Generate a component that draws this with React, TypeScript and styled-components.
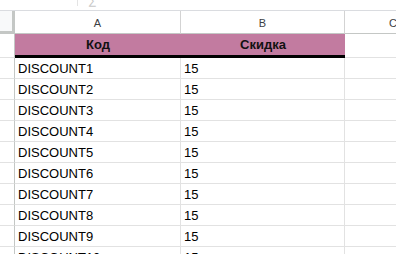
import { createGlobalStyle, styled } from 'styled-components';

const GlobalStyle = createGlobalStyle`
  html, body {
    margin: 0;
    padding: 0;
    background: #ffffff;
    overflow: hidden;
  }
  body {
    font-family: 'Liberation Sans', Arial, sans-serif;
  }
`;

// row head, A, B, C (C runs past the window edge)
const COLS = '15px 166px 164px 96px';

const rows = Array.from({ length: 10 }, (_, i) => ({
  code: `DISCOUNT${i + 1}`,
  discount: '15',
}));

export default function App() {
  return (
    <Sheet>
      <GlobalStyle />
      <TopStrip>
        <Divider />
        <FuncGlyph>∑</FuncGlyph>
      </TopStrip>
      <ColHeadRow>
        <Corner />
        <ColHead>A</ColHead>
        <ColHead>B</ColHead>
        <ColHead $last>C</ColHead>
      </ColHeadRow>
      <TitleRow>
        <RowHead />
        <TitleCell>Код</TitleCell>
        <TitleCell>Скидка</TitleCell>
        <Cell />
      </TitleRow>
      {rows.map((r) => (
        <Row key={r.code}>
          <RowHead />
          <Cell>{r.code}</Cell>
          <Cell>{r.discount}</Cell>
          <Cell />
        </Row>
      ))}
    </Sheet>
  );
}

const Sheet = styled.div`
  width: 396px;
  height: 254px;
  overflow: hidden;
  background: #fff;
`;

const TopStrip = styled.div`
  height: 10px;
  border-bottom: 1px solid #dadce0;
  display: flex;
  align-items: flex-end;
  padding-left: 77px;
  gap: 10px;
  overflow: hidden;
`;

const Divider = styled.div`
  width: 1px;
  height: 7px;
  margin-bottom: 4px;
  background: #e4e4e4;
`;

const FuncGlyph = styled.span`
  font-size: 12px;
  line-height: 12px;
  color: #c8c8c8;
  margin-bottom: 4px;
`;

const ColHeadRow = styled.div`
  display: grid;
  grid-template-columns: ${COLS};
  height: 23px;
`;

const Corner = styled.div`
  background: #f8f9fa;
  border-right: 3px solid #c4c7c5;
  border-bottom: 3px solid #c4c7c5;
`;

const ColHead = styled.div<{ $last?: boolean }>`
  display: flex;
  align-items: center;
  justify-content: center;
  font-size: 11px;
  color: #3c4043;
  border-right: ${(p) => (p.$last ? 'none' : '1px solid #d3d3d3')};
  border-bottom: 1px solid #c4c7c5;
  padding-top: 1px;
`;

const Row = styled.div`
  display: grid;
  grid-template-columns: ${COLS};
  height: 21px;
`;

const TitleRow = styled(Row)`
  height: 24px;
`;

const RowHead = styled.div`
  background: #ffffff;
  border-right: 1px solid #c4c7c5;
  border-bottom: 1px solid #e2e2e2;
`;

const Cell = styled.div`
  display: flex;
  align-items: center;
  padding-left: 3px;
  font-size: 13px;
  color: #000;
  border-right: 1px solid #e2e2e2;
  border-bottom: 1px solid #e2e2e2;
  white-space: nowrap;
  overflow: hidden;
`;

const TitleCell = styled.div`
  display: flex;
  align-items: center;
  justify-content: center;
  background: #c27ba0;
  font-size: 13px;
  font-weight: 700;
  color: #111;
  border-bottom: 3px solid #000;
  padding-bottom: 1px;
`;
